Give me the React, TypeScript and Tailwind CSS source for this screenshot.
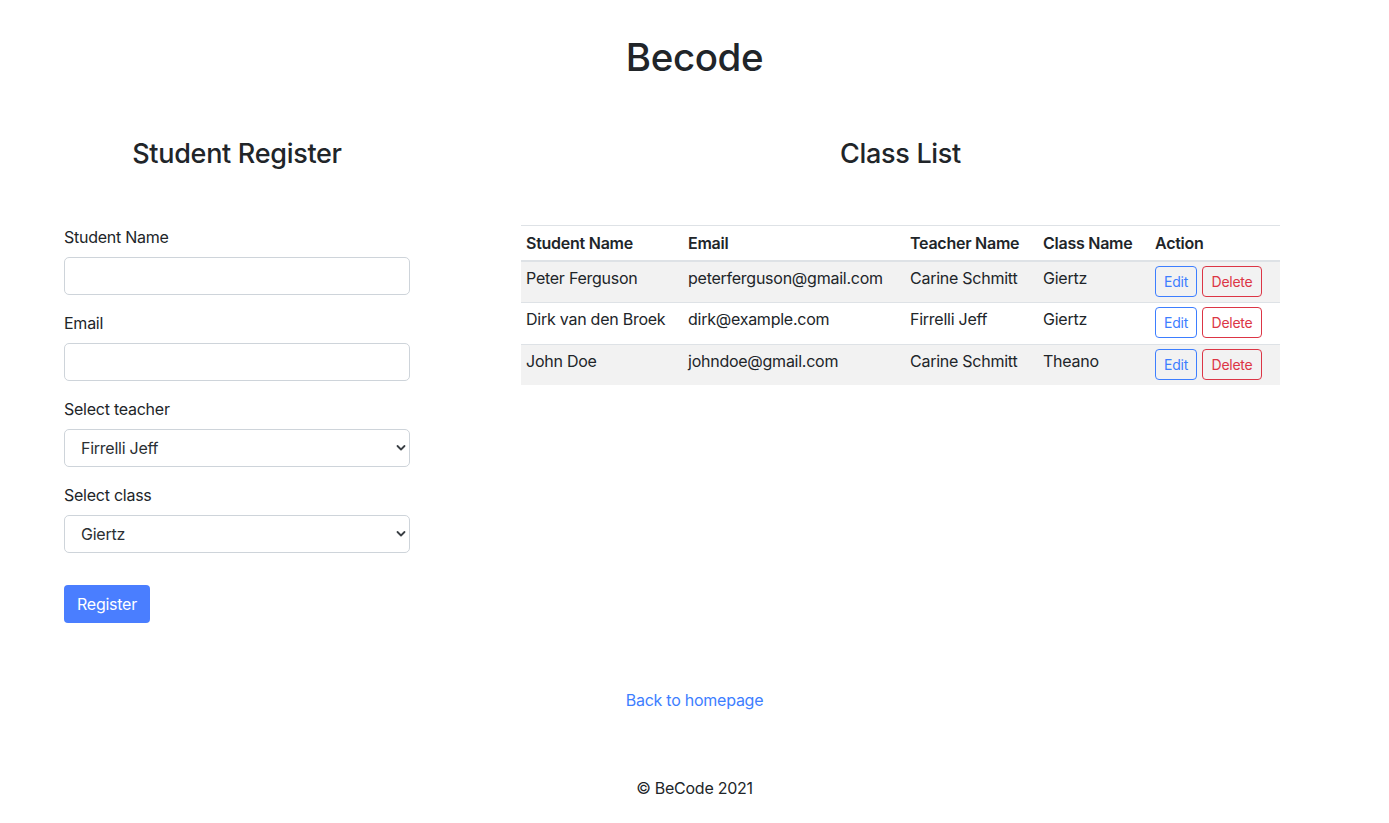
import React from "react";

const rows = [
  { name: "Peter Ferguson", email: "peterferguson@gmail.com", teacher: "Carine Schmitt", cls: "Giertz", striped: true },
  { name: "Dirk van den Broek", email: "dirk@example.com", teacher: "Firrelli Jeff", cls: "Giertz", striped: false },
  { name: "John Doe", email: "johndoe@gmail.com", teacher: "Carine Schmitt", cls: "Theano", striped: true },
];

function Chevron() {
  return (
    <svg width="10" height="7" viewBox="0 0 10 7" className="absolute right-[4px] top-1/2 -translate-y-1/2 pointer-events-none">
      <path d="M1.5 1.5 L5 5 L8.5 1.5" fill="none" stroke="#3a3f44" strokeWidth="1.8" strokeLinecap="round" strokeLinejoin="round" />
    </svg>
  );
}

function Select({ value }: { value: string }) {
  return (
    <div className="relative w-[346px] h-[38px]">
      <select
        defaultValue={value}
        className="appearance-none w-full h-full border border-[#ced4da] rounded-[5px] bg-white pl-4 pr-6 text-[16px] text-[#2b2f33] outline-none tracking-[-0.25px]"
      >
        <option>{value}</option>
      </select>
      <Chevron />
    </div>
  );
}

export default function App() {
  return (
    <div className="min-h-[823px] bg-white text-[#212529] text-[16px] tracking-[-0.25px]" style={{ fontFamily: "Inter, 'Noto Sans', sans-serif" }}>
      <h1 className="text-center text-[38.5px] font-medium leading-[48px] pt-[33px] tracking-[-0.4px]">Becode</h1>

      <div className="flex pl-[64px] mt-[56px]">
        <div className="w-[346px] flex flex-col">
          <h3 className="text-center text-[27px] font-medium leading-[34px] tracking-[-0.3px] h-[34px]">Student Register</h3>
          <div className="mt-[54px] flex flex-col">
            <label className="leading-[24px] mb-[8px]">Student Name</label>
            <input className="w-[346px] h-[38px] border border-[#ced4da] rounded-[5px] outline-none px-3" />
            <label className="leading-[24px] mt-[16px] mb-[8px]">Email</label>
            <input className="w-[346px] h-[38px] border border-[#ced4da] rounded-[5px] outline-none px-3" />
            <label className="leading-[24px] mt-[16px] mb-[8px]">Select teacher</label>
            <Select value="Firrelli Jeff" />
            <label className="leading-[24px] mt-[16px] mb-[8px]">Select class</label>
            <Select value="Giertz" />
            <div className="mt-[32px]">
              <button className="h-[38px] w-[86px] rounded-[4px] bg-[#4a7eff] text-white text-[16px]">Register</button>
            </div>
          </div>
        </div>

        <div className="ml-[111px] w-[759px] flex flex-col">
          <h3 className="text-center text-[27px] font-medium leading-[34px] tracking-[-0.3px] h-[34px]">Class List</h3>
          <table className="mt-[54px] w-[759px] border-collapse text-left">
            <colgroup>
              <col className="w-[162px]" />
              <col className="w-[222px]" />
              <col className="w-[133px]" />
              <col className="w-[112px]" />
              <col className="w-[130px]" />
            </colgroup>
            <thead>
              <tr className="border-t border-[#dee2e6] border-b-2 border-b-[#dee2e6] h-[35px]">
                <th className="px-[5px] font-semibold align-middle">Student Name</th>
                <th className="px-[5px] font-semibold align-middle">Email</th>
                <th className="px-[5px] font-semibold align-middle">Teacher Name</th>
                <th className="px-[5px] font-semibold align-middle">Class Name</th>
                <th className="px-[5px] font-semibold align-middle">Action</th>
              </tr>
            </thead>
            <tbody>
              {rows.map((r, i) => (
                <tr
                  key={i}
                  className={`${r.striped ? "bg-[#f2f2f2]" : "bg-white"} ${i < rows.length - 1 ? "border-b border-[#dee2e6] h-[42px]" : "h-[40px]"}`}
                >
                  <td className="px-[5px] align-top pt-[4px]">{r.name}</td>
                  <td className="px-[5px] align-top pt-[4px]">{r.email}</td>
                  <td className="px-[5px] align-top pt-[4px]">{r.teacher}</td>
                  <td className="px-[5px] align-top pt-[4px]">{r.cls}</td>
                  <td className="px-[5px] align-top pt-[4px]">
                    <div className="flex gap-[5px]">
                      <button className="h-[31px] w-[42px] border border-[#3d7eff] text-[#3d7eff] rounded-[4px] text-[14px]">Edit</button>
                      <button className="h-[31px] w-[60px] border border-[#dc3545] text-[#dc3545] rounded-[4px] text-[14px]">Delete</button>
                    </div>
                  </td>
                </tr>
              ))}
            </tbody>
          </table>
        </div>
      </div>

      <div className="text-center mt-[65px] leading-[24px]">
        <a href="#" className="text-[#3d7eff]">Back to homepage</a>
      </div>
      <div className="text-center mt-[64px] leading-[24px]">© BeCode 2021</div>
    </div>
  );
}
